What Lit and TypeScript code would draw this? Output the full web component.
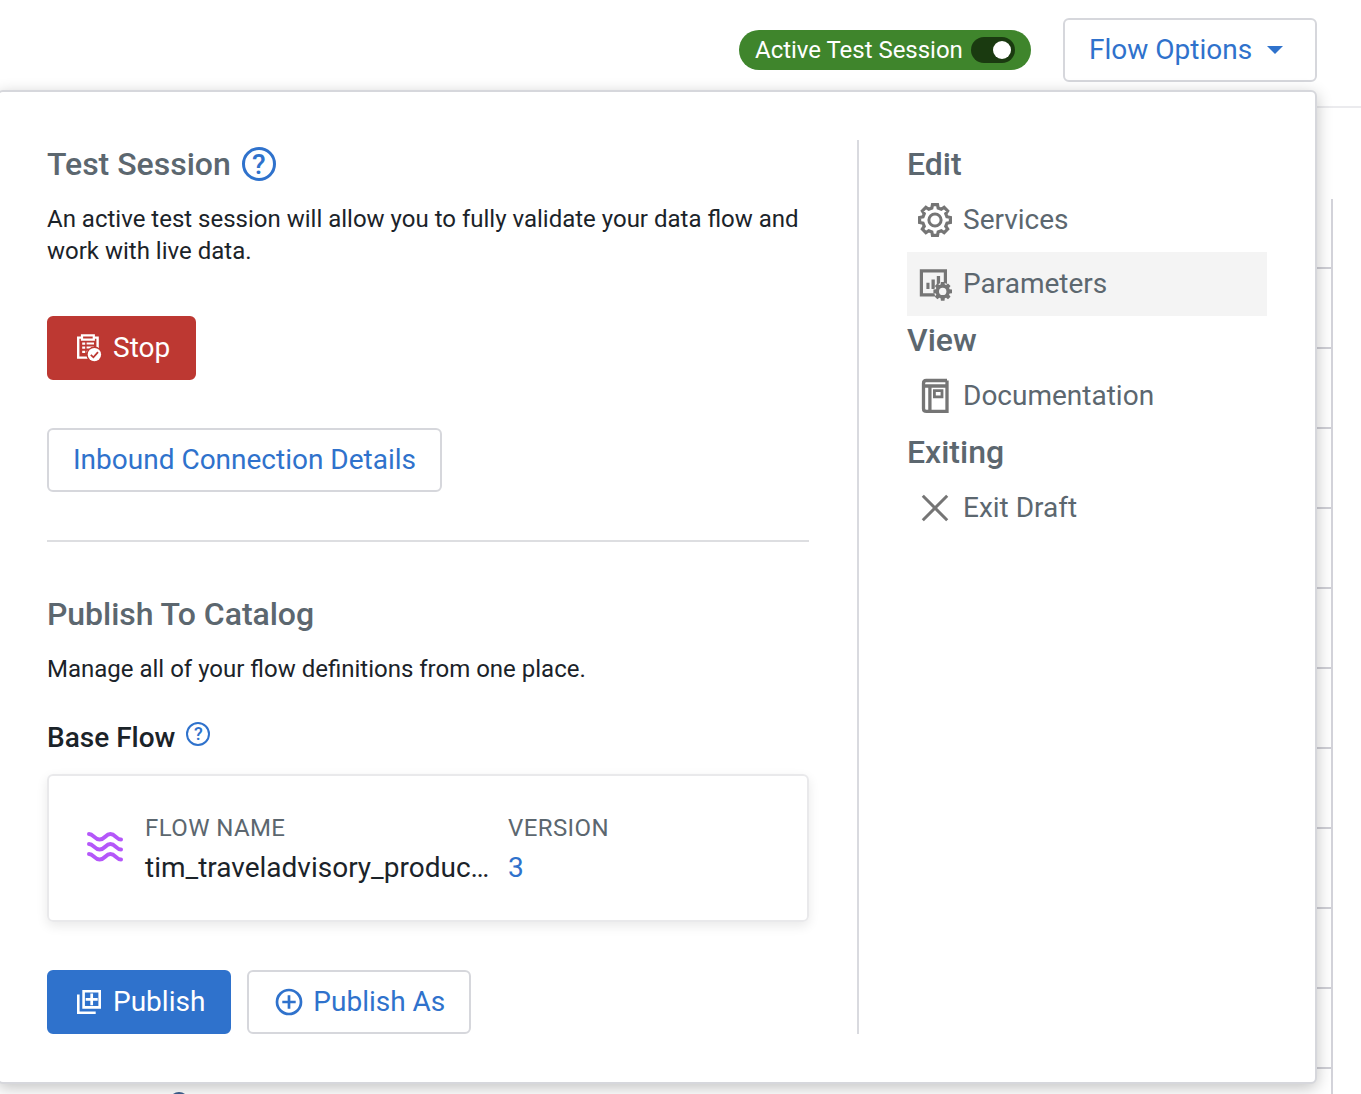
import { LitElement, html, svg, css } from "lit";
import { customElement, property } from "lit/decorators.js";

/** Closed outline of an eight-toothed gear centred on (cx, cy). */
function gearPath(cx: number, cy: number, tip: number, root: number, tipHalf: number, rootHalf: number): string {
  const pts: string[] = [];
  for (let i = 0; i < 8; i++) {
    const a = (i * Math.PI) / 4;
    const corners: [number, number][] = [
      [root, -rootHalf],
      [tip, -tipHalf],
      [tip, tipHalf],
      [root, rootHalf],
    ];
    for (const [r, t] of corners) {
      const x = cx + r * Math.cos(a) - t * Math.sin(a);
      const y = cy + r * Math.sin(a) + t * Math.cos(a);
      pts.push(`${x.toFixed(2)} ${y.toFixed(2)}`);
    }
  }
  return `M${pts.join("L")}Z`;
}

const stroke = (d: string, w: number) =>
  svg`<path d=${d} fill="none" stroke="currentColor" stroke-width=${w}></path>`;

const icons: Record<string, { size: number; body: unknown }> = {
  services: {
    size: 36,
    body: svg`
      <path d=${gearPath(18, 18, 15.4, 12, 2.5, 3.2)} fill="none" stroke="currentColor" stroke-width="3.2"></path>
      <circle cx="18" cy="18" r="6.1" fill="none" stroke="currentColor" stroke-width="3"></circle>`,
  },
  parameters: {
    size: 36,
    body: svg`
      ${stroke("M4.4 4.8H28.4V28.8H4.4Z", 3.2)}
      <path d="M9.4 16.7h3.1v6.2h-3.1zM14.5 13.4h3.3v9.5h-3.3zM19.8 10h3.3v9h-3.3z" fill="currentColor"></path>
      <circle class="cut" cx="25.7" cy="25.4" r="8.6"></circle>
      <path d=${gearPath(25.7, 25.4, 9.3, 6.9, 1.8, 2.1)} fill="currentColor"></path>
      <circle class="cut" cx="25.7" cy="25.4" r="3.7"></circle>`,
  },
  docs: {
    size: 36,
    body: svg`
      ${stroke("M30 8H7.5M30 2.5H9.2Q6.5 2.5 6.5 5.4V30.4Q6.5 33.4 9.5 33.4H30V2.5M12.9 8V33", 3.3)}
      ${stroke("M17.4 12.6H25V18.9H17.4Z", 2.8)}`,
  },
  close: { size: 36, body: stroke("M5.8 5.8 30.2 30.2M30.2 5.8 5.8 30.2", 3) },
  stop: {
    size: 32,
    body: svg`
      ${stroke("M9.5 5.6H5.2V25.6H17M20.5 5.6H24.6V17", 2.4)}
      ${stroke("M9 3.3H20.8V7.6H9Z", 2.2)}
      <path d="M9.2 10.6h3v2.2h-3zM9.2 14.6h3v2.2h-3zM9.2 18.7h3v2.4h-3zM13.6 10.6h7.4v2h-7.4zM13.6 14.6h7.4v1.9h-7.4zM13.6 18.7h3v2h-3z" fill="currentColor"></path>
      <circle class="cut" cx="21.4" cy="22.6" r="8"></circle>
      <circle cx="21.4" cy="22.6" r="6.7" fill="currentColor"></circle>
      <path class="cut-line" d="M17.8 22.9 20.4 25.3 25 20.2" fill="none" stroke-width="1.8"></path>`,
  },
  publish: {
    size: 32,
    body: svg`
      ${stroke("M10.6 5.3H26.7V21.4H10.6Z", 2.6)}
      ${stroke("M18.7 7.4V19.3M12.7 13.35H24.7", 2.7)}
      ${stroke("M5.3 8.5V26.7H22.7", 2.6)}`,
  },
  plus: {
    size: 32,
    body: svg`
      <circle cx="16" cy="16" r="12" fill="none" stroke="currentColor" stroke-width="2.7"></circle>
      ${stroke("M16 9.3V22.7M9.3 16H22.7", 2.7)}`,
  },
  caret: { size: 16, body: svg`<path d="M0 4H16L8 12Z" fill="currentColor"></path>` },
  waves: {
    size: 36,
    body: svg`${[5, 15, 25].map(
      (y) => svg`<path d="M2 ${y}C6.5 ${y} 7.5 ${y + 5.6} 12.6 ${y + 5.6}S18.6 ${y} 23.4 ${y}S29.5 ${y + 5.6} 34 ${y + 5.6}"
        fill="none" stroke="currentColor" stroke-width="4" stroke-linecap="round"></path>`
    )}`,
  },
};

@customElement("ui-icon")
class UiIcon extends LitElement {
  @property() name = "";
  static styles = css`
    :host { display: block; flex: none; }
    svg { display: block; }
    .cut { fill: var(--icon-ground, #fff); }
    .cut-line { stroke: var(--icon-ground, #fff); }
  `;
  render() {
    const icon = icons[this.name];
    return html`<svg width=${icon.size} height=${icon.size} viewBox="0 0 ${icon.size} ${icon.size}">${icon.body}</svg>`;
  }
}

@customElement("help-badge")
class HelpBadge extends LitElement {
  static styles = css`
    :host {
      box-sizing: border-box;
      flex: none;
      display: flex;
      align-items: center;
      justify-content: center;
      width: 34px;
      height: 34px;
      padding-top: 2px;
      border: 3px solid #2f72cc;
      border-radius: 50%;
      color: #2f72cc;
      font: 500 28px/28px Roboto, sans-serif;
    }
    :host([small]) {
      width: 24px;
      height: 24px;
      padding-top: 0;
      border-width: 2px;
      font-size: 18px;
      line-height: 20px;
    }
  `;
  render() {
    return html`<span>?</span>`;
  }
}

const menu = [
  { title: "Edit", items: [
    { icon: "services", label: "Services", active: false },
    { icon: "parameters", label: "Parameters", active: true },
  ] },
  { title: "View", items: [{ icon: "docs", label: "Documentation", active: false }] },
  { title: "Exiting", items: [{ icon: "close", label: "Exit Draft", active: false }] },
];

@customElement("app-root")
class AppRoot extends LitElement {
  static styles = css`
    :host {
      display: block;
      position: relative;
      width: 1361px;
      height: 1094px;
      overflow: hidden;
      background: #fff;
      color: #1b2329;
      font-family: Roboto, sans-serif;
      font-size: 24px;
      line-height: 32px;
      white-space: nowrap;
    }
    * { box-sizing: border-box; }
    h2, h3, p { margin: 0; font-weight: 500; }
    p { font-weight: 400; }

    .topbar {
      display: flex;
      justify-content: flex-end;
      align-items: center;
      gap: 32px;
      height: 108px;
      padding: 0 44px 8px 0;
      border-bottom: 2px solid #ebebee;
    }
    .topbar .btn { margin-top: 2px; }
    .session {
      display: flex;
      align-items: center;
      gap: 8px;
      height: 40px;
      width: 292px;
      margin-top: 2px;
      padding: 0 16px;
      border-radius: 20px;
      background: #3f852c;
      color: #fff;
    }
    .session span { width: 208px; letter-spacing: -0.02px; }
    .toggle {
      display: flex;
      justify-content: flex-end;
      align-items: center;
      width: 44px;
      height: 26px;
      padding-right: 4px;
      border-radius: 13px;
      background: #1a3a10;
    }
    .knob { width: 18px; height: 18px; border-radius: 50%; background: #fff; }

    .btn {
      display: flex;
      align-items: center;
      gap: 8px;
      width: fit-content;
      height: 64px;
      padding: 0 24px;
      border: 2px solid #d6d7dc;
      border-radius: 6px;
      background: #fff;
      color: #2f72cc;
      font: 400 28px/40px Roboto, sans-serif;
    }
    .options { width: 254px; gap: 15px; }
    .stop { --icon-ground: #bd3832; background: #bd3832; border-color: #bd3832; color: #fff; }
    .primary { background: #2f72cc; border-color: #2f72cc; color: #fff; }

    .canvas { padding: 91px 28px 0 0; }
    .grid { height: 900px; border-right: 2px solid #d3d3da; }
    .line { height: 80px; border-bottom: 2px solid #cfcfd6; }
    .line:first-child { height: 70px; }
    .node {
      position: absolute;
      left: 169px;
      top: 1092px;
      width: 20px;
      height: 20px;
      border: 3px solid #3d5f8e;
      border-radius: 50%;
    }

    .panel {
      position: absolute;
      left: -3px;
      top: 90px;
      display: flex;
      width: 1320px;
      height: 994px;
      padding: 48px;
      border: 2px solid #d6d7dc;
      border-radius: 6px;
      background: #fff;
      box-shadow: 0 4px 16px rgba(0, 0, 0, 0.24);
    }
    .main {
      display: flex;
      flex-direction: column;
      width: 812px;
      padding-right: 48px;
      border-right: 2px solid #d9dadf;
    }
    .side { width: 360px; margin-left: 48px; }
    .title {
      display: flex;
      align-items: center;
      gap: 11px;
      height: 48px;
      color: #5c676f;
      font-size: 32px;
      line-height: 48px;
    }
    .catalog { letter-spacing: -0.05px; }
    .copy { margin-top: 15px; }
    .stop { margin-top: 49px; }
    .inbound { margin-top: 48px; }
    .rule { height: 2px; margin: 48px 0; background: #dddee1; }
    .sub {
      display: flex;
      gap: 11px;
      height: 40px;
      margin-top: 32px;
      font-size: 28px;
      line-height: 42px;
    }
    .sub help-badge { margin-top: 5px; }
    .card {
      display: flex;
      height: 148px;
      margin-top: 17px;
      padding: 36px 38px 0;
      border: 2px solid #e9e9eb;
      border-radius: 6px;
      box-shadow: 0 4px 12px rgba(0, 0, 0, 0.09);
    }
    .card ui-icon { margin-top: 17px; color: #b457f9; }
    .name { width: 363px; margin-left: 22px; }
    .label { color: #5c676f; letter-spacing: 0.4px; }
    .value { margin-top: 4px; font-size: 28px; line-height: 40px; }
    .link { color: #2f72cc; }
    .actions { display: flex; gap: 16px; margin-top: 48px; }

    .item {
      display: flex;
      align-items: center;
      gap: 10px;
      height: 64px;
      padding-left: 10px;
      color: #5c676f;
      font-size: 28px;
    }
    .item ui-icon { color: #757575; }
    .active { background: #f4f4f4; --icon-ground: #f4f4f4; }
  `;

  render() {
    return html`
      <header class="topbar">
        <div class="session">
          <span>Active Test Session</span>
          <div class="toggle"><div class="knob"></div></div>
        </div>
        <button class="btn options">Flow Options<ui-icon name="caret"></ui-icon></button>
      </header>
      <div class="canvas">
        <div class="grid">${Array.from({ length: 11 }, () => html`<div class="line"></div>`)}</div>
      </div>
      <div class="node"></div>
      <section class="panel">
        <div class="main">
          <h2 class="title">Test Session<help-badge></help-badge></h2>
          <p class="copy">
            An active test session will allow you to fully validate your data flow and<br />work with live data.
          </p>
          <button class="btn stop"><ui-icon name="stop"></ui-icon>Stop</button>
          <button class="btn inbound">Inbound Connection Details</button>
          <div class="rule"></div>
          <h2 class="title catalog">Publish To Catalog</h2>
          <p class="copy">Manage all of your flow definitions from one place.</p>
          <h3 class="sub">Base Flow<help-badge small></help-badge></h3>
          <div class="card">
            <ui-icon name="waves"></ui-icon>
            <div class="name">
              <div class="label">FLOW NAME</div>
              <div class="value">tim_traveladvisory_produc…</div>
            </div>
            <div>
              <div class="label">VERSION</div>
              <div class="value link">3</div>
            </div>
          </div>
          <div class="actions">
            <button class="btn primary"><ui-icon name="publish"></ui-icon>Publish</button>
            <button class="btn"><ui-icon name="plus"></ui-icon>Publish As</button>
          </div>
        </div>
        <nav class="side">
          ${menu.map(
            (group) => html`
              <h2 class="title">${group.title}</h2>
              ${group.items.map(
                (item) => html`<div class="item ${item.active ? "active" : ""}">
                  <ui-icon name=${item.icon}></ui-icon>${item.label}
                </div>`
              )}
            `
          )}
        </nav>
      </section>
    `;
  }
}
